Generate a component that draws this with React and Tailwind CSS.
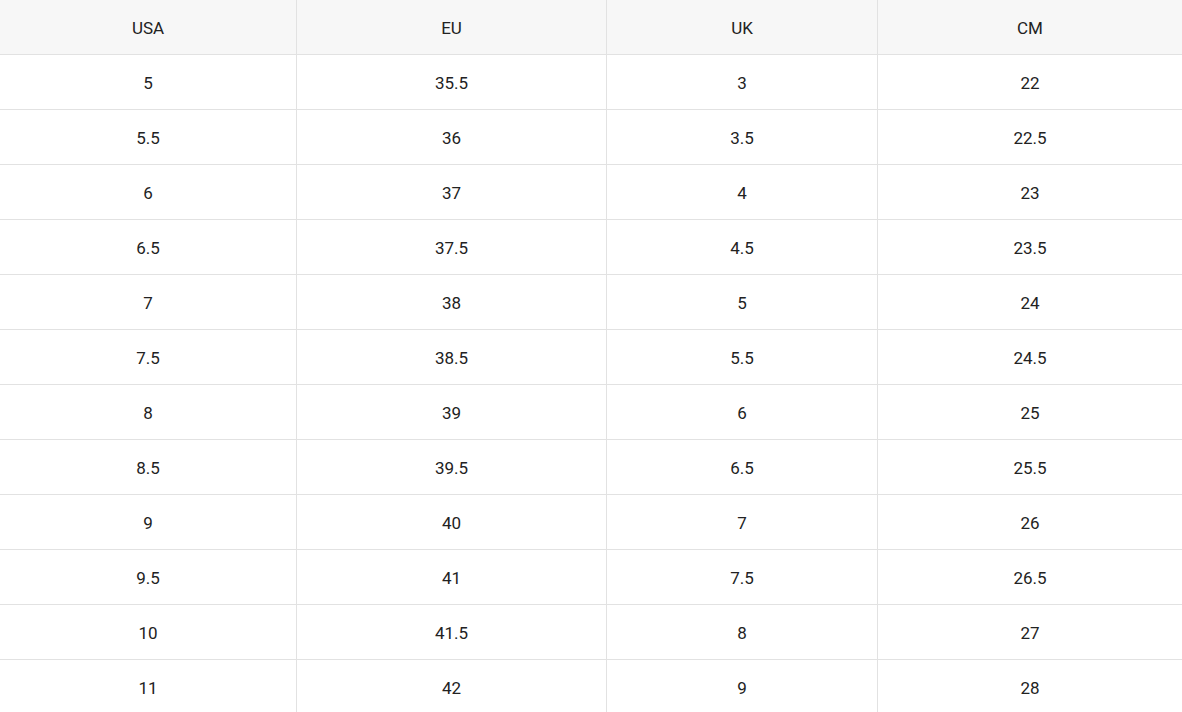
const rows = [
  ["5", "35.5", "3", "22"],
  ["5.5", "36", "3.5", "22.5"],
  ["6", "37", "4", "23"],
  ["6.5", "37.5", "4.5", "23.5"],
  ["7", "38", "5", "24"],
  ["7.5", "38.5", "5.5", "24.5"],
  ["8", "39", "6", "25"],
  ["8.5", "39.5", "6.5", "25.5"],
  ["9", "40", "7", "26"],
  ["9.5", "41", "7.5", "26.5"],
  ["10", "41.5", "8", "27"],
  ["11", "42", "9", "28"],
];

const cols = "grid grid-cols-[296px_310px_271px_305px]";

export default function App() {
  return (
    <div className="w-[1182px] h-[712px] overflow-hidden bg-white text-[#222] text-[17px]" style={{ fontFamily: "Roboto, 'Liberation Sans', sans-serif" }}>
      <div className={`${cols} h-[55px] bg-[#f7f7f7] border-b border-[#e2e2e2]`}>
        {["USA", "EU", "UK", "CM"].map((h, i) => (
          <div key={h} className={`flex items-center justify-center pt-1 ${i > 0 ? "border-l border-[#e2e2e2]" : ""}`}>{h}</div>
        ))}
      </div>
      {rows.map((r, ri) => (
        <div key={ri} className={`${cols} h-[55px] border-b border-[#e2e2e2]`}>
          {r.map((c, i) => (
            <div key={i} className={`flex items-center justify-center pt-1 ${i > 0 ? "border-l border-[#e2e2e2]" : ""}`}>{c}</div>
          ))}
        </div>
      ))}
    </div>
  );
}
